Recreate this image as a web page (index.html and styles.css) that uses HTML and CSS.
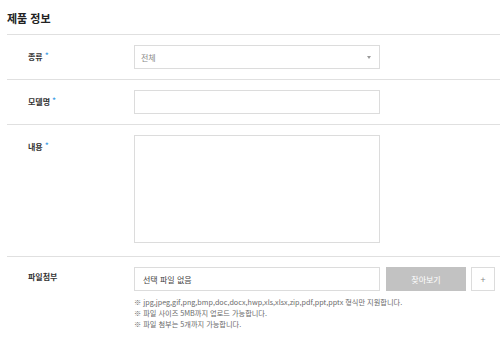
FILE: index.html
```html
<!DOCTYPE html>
<html lang="ko">
<head>
<meta charset="utf-8">
<link rel="stylesheet" href="styles.css">
</head>
<body>
<section class="panel">
  <h2 class="title">제품 정보</h2>
  <div class="row">
    <div class="label">종류 <span class="req">*</span></div>
    <div class="field">
      <div class="select">
        <span class="select-text">전체</span>
        <span class="arrow"></span>
      </div>
    </div>
  </div>
  <div class="row">
    <div class="label">모델명 <span class="req">*</span></div>
    <div class="field">
      <div class="input"></div>
    </div>
  </div>
  <div class="row row-tall">
    <div class="label">내용 <span class="req">*</span></div>
    <div class="field">
      <div class="textarea"></div>
    </div>
  </div>
  <div class="row row-file">
    <div class="label label-file">파일첨부</div>
    <div class="field">
      <div class="file-line">
        <div class="input file-name">선택 파일 없음</div>
        <button class="btn-find" type="button">찾아보기</button>
        <button class="btn-add" type="button">+</button>
      </div>
      <ul class="notes">
        <li>※ jpg,jpeg,gif,png,bmp,doc,docx,hwp,xls,xlsx,zip,pdf,ppt,pptx 형식만 지원합니다.</li>
        <li>※ 파일 사이즈 5MB까지 업로드 가능합니다.</li>
        <li>※ 파일 첨부는 5개까지 가능합니다.</li>
      </ul>
    </div>
  </div>
</section>
</body>
</html>
```

FILE: styles.css
```css
html, body {
  margin: 0;
  padding: 0;
  background: #fff;
}
body {
  font-family: "Noto Sans CJK KR", "Noto Sans", sans-serif;
  color: #333;
  width: 500px;
  height: 344px;
  overflow: hidden;
}
.panel {
  padding-left: 7px;
}
.title {
  margin: 0;
  padding-top: 10px;
  height: 24px;
  font-size: 11px;
  line-height: 17px;
  font-weight: 700;
  color: #222;
}
.row {
  display: flex;
  align-items: flex-start;
  border-top: 1px solid #e0e0e0;
  padding: 10px 0;
}
.row-tall {
  padding-bottom: 13px;
}
.row-file {
  padding-bottom: 0;
}
.label {
  width: 127px;
  height: 24px;
  box-sizing: border-box;
  padding-left: 21px;
  font-size: 8px;
  font-weight: 700;
  line-height: 24px;
  color: #333;
}
.label-file {
  line-height: 20px;
}
.req {
  color: #3a9ee6;
  font-size: 7px;
  line-height: 1;
  vertical-align: 2px;
}
.field {
  flex: 1;
}
.select,
.input,
.textarea {
  box-sizing: border-box;
  width: 246px;
  height: 24px;
  border: 1px solid #dcdcdc;
  background: #fff;
}
.select {
  display: flex;
  align-items: center;
  justify-content: space-between;
  padding: 0 8px 0 6px;
}
.select-text {
  font-size: 8px;
  color: #888;
}
.arrow {
  width: 0;
  height: 0;
  border-left: 2.5px solid transparent;
  border-right: 2.5px solid transparent;
  border-top: 3px solid #999;
}
.textarea {
  height: 108px;
}
.file-line {
  display: flex;
  align-items: center;
}
.file-name {
  display: flex;
  align-items: center;
  padding-left: 8px;
  font-size: 8px;
  color: #444;
}
.btn-find {
  margin-left: 6px;
  width: 80px;
  height: 24px;
  border: 0;
  background: #c2c2c2;
  color: #fff;
  font-family: inherit;
  font-size: 8px;
  padding: 0;
}
.btn-add {
  margin-left: 5px;
  width: 24px;
  height: 24px;
  box-sizing: border-box;
  border: 1px solid #dcdcdc;
  background: #fff;
  color: #888;
  font-family: inherit;
  font-size: 9px;
  padding: 0;
}
.notes {
  list-style: none;
  margin: 6px 0 0;
  padding: 0;
  font-size: 7.2px;
  line-height: 11px;
  color: #6a6a6a;
}
```
